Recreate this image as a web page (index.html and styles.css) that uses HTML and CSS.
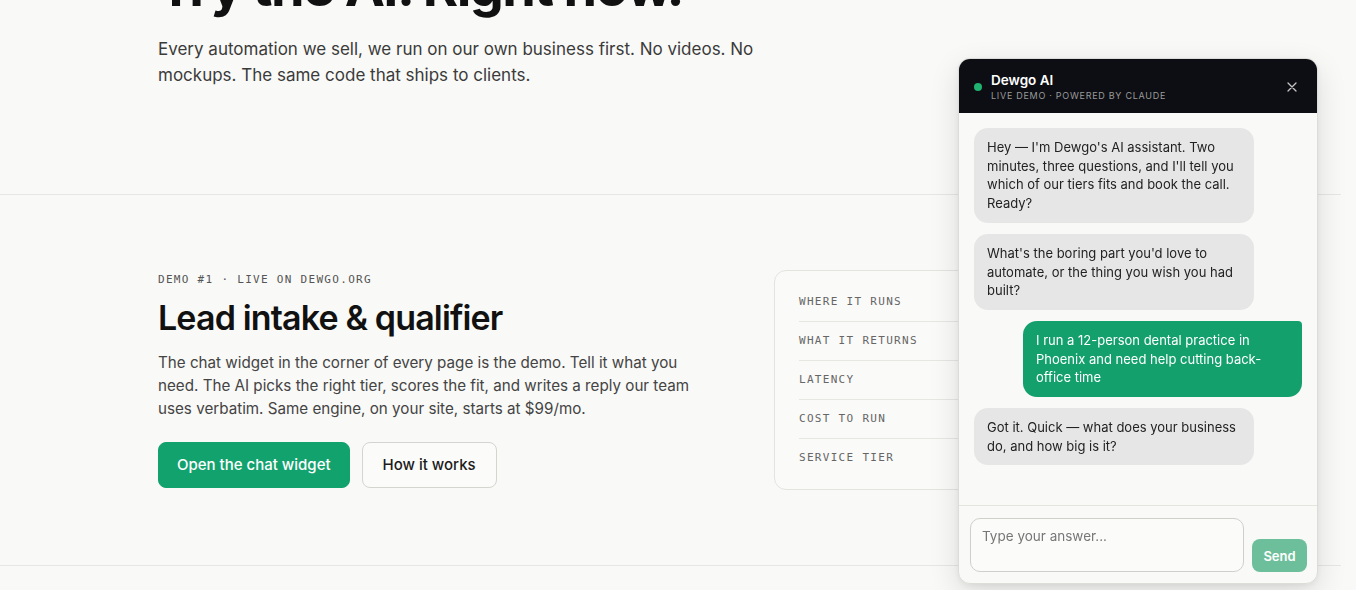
FILE: index.html
```html
<!DOCTYPE html>
<html lang="en">
<head>
  <meta charset="UTF-8">
  <meta name="viewport" content="width=device-width, initial-scale=1.0">
  <title>Dewgo — Try the AI</title>
  <link rel="stylesheet" href="styles.css">
</head>
<body>
  <main class="page">
    <section class="hero">
      <div class="wrap">
        <h1 class="hero-title">Try the AI. Right now.</h1>
        <p class="hero-lead">Every automation we sell, we run on our own business first. No videos. No mockups. The same code that ships to clients.</p>
      </div>
    </section>

    <section class="demo">
      <div class="wrap demo-grid">
        <div class="demo-copy">
          <div class="eyebrow">DEMO #1 · LIVE ON DEWGO.ORG</div>
          <h2 class="demo-title">Lead intake &amp; qualifier</h2>
          <p class="demo-text">The chat widget in the corner of every page is the demo. Tell it what you need. The AI picks the right tier, scores the fit, and writes a reply our team uses verbatim. Same engine, on your site, starts at $99/mo.</p>
          <div class="actions">
            <a class="btn btn-primary" href="#chat">Open the chat widget</a>
            <a class="btn btn-ghost" href="#how">How it works</a>
          </div>
        </div>

        <dl class="specs">
          <div class="spec-row"><dt>Where it runs</dt></div>
          <div class="spec-row"><dt>What it returns</dt></div>
          <div class="spec-row"><dt>Latency</dt></div>
          <div class="spec-row"><dt>Cost to run</dt></div>
          <div class="spec-row"><dt>Service tier</dt></div>
        </dl>
      </div>
    </section>
  </main>

  <!-- floating chat widget -->
  <aside class="chat" id="chat">
    <header class="chat-head">
      <span class="chat-dot"></span>
      <div class="chat-id">
        <div class="chat-name">Dewgo AI</div>
        <div class="chat-sub">LIVE DEMO · POWERED BY CLAUDE</div>
      </div>
      <button class="chat-close" aria-label="Close">
        <svg width="10" height="10" viewBox="0 0 10 10"><path d="M1 1L9 9M9 1L1 9" stroke="currentColor" stroke-width="1.3" stroke-linecap="round"/></svg>
      </button>
    </header>

    <div class="chat-log">
      <div class="bubble bot">Hey — I'm Dewgo's AI assistant. Two minutes, three questions, and I'll tell you which of our tiers fits and book the call. Ready?</div>
      <div class="bubble bot">What's the boring part you'd love to automate, or the thing you wish you had built?</div>
      <div class="bubble user">I run a 12-person dental practice in Phoenix and need help cutting back-office time</div>
      <div class="bubble bot">Got it. Quick — what does your business do, and how big is it?</div>
    </div>

    <form class="chat-form">
      <textarea class="chat-input" placeholder="Type your answer..."></textarea>
      <button class="chat-send" type="button">Send</button>
    </form>
  </aside>
</body>
</html>
```

FILE: styles.css
```css
* {
  box-sizing: border-box;
}

body {
  margin: 0;
  background: #f9f9f7;
  color: #141414;
  font-family: Inter, 'Noto Sans', sans-serif;
  overflow: hidden;
}

.page {
  margin-right: 15px;
}

.wrap {
  width: 1025px;
  margin: 0 auto;
}

/* hero, scrolled past the top of the viewport */
.hero {
  margin-top: -44px;
  padding-bottom: 106px;
  border-bottom: 1px solid #e6e6e2;
}

.hero-title {
  margin: 0 0 18px;
  font-size: 54px;
  line-height: 62px;
  font-weight: 700;
  letter-spacing: -0.03em;
  color: #111;
}

.hero-lead {
  margin: 0;
  max-width: 620px;
  font-size: 17px;
  line-height: 26px;
  color: #3b3b3b;
}

/* demo block */
.demo {
  padding: 75px 0 75px;
  border-bottom: 1px solid #e6e6e2;
}

.demo-grid {
  display: grid;
  grid-template-columns: 560px 1fr;
  gap: 56px;
  align-items: center;
}

.eyebrow {
  font-family: 'DejaVu Sans Mono', 'Liberation Mono', monospace;
  font-size: 11px;
  line-height: 14px;
  letter-spacing: 1.3px;
  color: #555;
}

.demo-title {
  margin: 10px 0 12px;
  font-size: 34px;
  line-height: 42px;
  font-weight: 600;
  letter-spacing: -0.025em;
  color: #111;
}

.demo-text {
  margin: 0;
  max-width: 540px;
  font-size: 15.2px;
  line-height: 23px;
  color: #444;
}

.actions {
  display: flex;
  gap: 12px;
  margin-top: 22px;
}

.btn {
  display: inline-block;
  padding: 12px 18px;
  border-radius: 8px;
  font-size: 15px;
  line-height: 20px;
  font-weight: 500;
  text-decoration: none;
}

.btn-primary {
  background: #12a26e;
  color: #fff;
  border: 1px solid #12a26e;
}

.btn-ghost {
  padding: 12px 20px;
  background: #fbfbfa;
  color: #1c1c1c;
  border: 1px solid #d4d4d0;
}

.specs {
  margin: 0;
  padding: 12px 24px;
  border: 1px solid #e3e3df;
  border-radius: 12px;
  background: #fafaf8;
}

.spec-row {
  padding: 11px 0;
  border-bottom: 1px solid #e6e6e2;
}

.spec-row:last-child {
  border-bottom: none;
}

.spec-row dt {
  margin: 0;
  font-family: 'DejaVu Sans Mono', 'Liberation Mono', monospace;
  font-size: 11px;
  line-height: 16px;
  letter-spacing: 1.3px;
  text-transform: uppercase;
  color: #666;
}

/* chat widget */
.chat {
  position: fixed;
  top: 58px;
  right: 38px;
  width: 360px;
  height: 526px;
  display: flex;
  flex-direction: column;
  background: #f9f9f7;
  border: 1px solid #dcdcd8;
  border-radius: 12px;
  overflow: hidden;
  box-shadow: 0 10px 30px rgba(0, 0, 0, 0.12), 0 2px 6px rgba(0, 0, 0, 0.06);
}

.chat-head {
  display: flex;
  align-items: center;
  height: 54px;
  padding: 0 16px 0 15px;
  background: #0d0e13;
  flex-shrink: 0;
}

.chat-dot {
  width: 8px;
  height: 8px;
  margin-top: 2px;
  border-radius: 50%;
  background: #1fb36f;
}

.chat-id {
  flex: 1;
  margin-left: 9px;
}

.chat-name {
  font-size: 13.5px;
  line-height: 17px;
  font-weight: 600;
  color: #fff;
}

.chat-sub {
  margin-top: 1px;
  font-size: 9px;
  line-height: 11px;
  letter-spacing: 0.08em;
  color: #9a9a9a;
}

.chat-close {
  padding: 4px;
  margin-top: 2px;
  border: none;
  background: none;
  color: #c6c6c6;
  line-height: 0;
}

.chat-log {
  flex: 1;
  display: flex;
  flex-direction: column;
  gap: 11px;
  padding: 15px 15px;
  overflow: hidden;
}

.bubble {
  max-width: 280px;
  padding: 10px 13px;
  border-radius: 14px;
  font-size: 13px;
  line-height: 18.7px;
}

.bubble.bot {
  align-self: flex-start;
  background: #e6e6e7;
  color: #222;
}

.bubble.user {
  align-self: flex-end;
  width: 279px;
  background: #13a06d;
  color: #fff;
  border-top-right-radius: 4px;
}

.chat-form {
  display: flex;
  align-items: flex-end;
  gap: 8px;
  margin: 0;
  padding: 12px 10px 11px 11px;
  border-top: 1px solid #e4e4e0;
  flex-shrink: 0;
}

.chat-input {
  flex: 1;
  height: 54px;
  padding: 8px 11px;
  border: 1px solid #cfcfcb;
  border-radius: 10px;
  background: #fbfbfa;
  font-family: Inter, 'Noto Sans', sans-serif;
  font-size: 13.5px;
  line-height: 19px;
  resize: none;
}

.chat-input::placeholder {
  color: #777;
}

.chat-send {
  width: 55px;
  height: 33px;
  border: none;
  border-radius: 8px;
  background: #6dbf9b;
  color: #fff;
  font-family: Inter, 'Noto Sans', sans-serif;
  font-size: 13px;
  font-weight: 600;
}
```
